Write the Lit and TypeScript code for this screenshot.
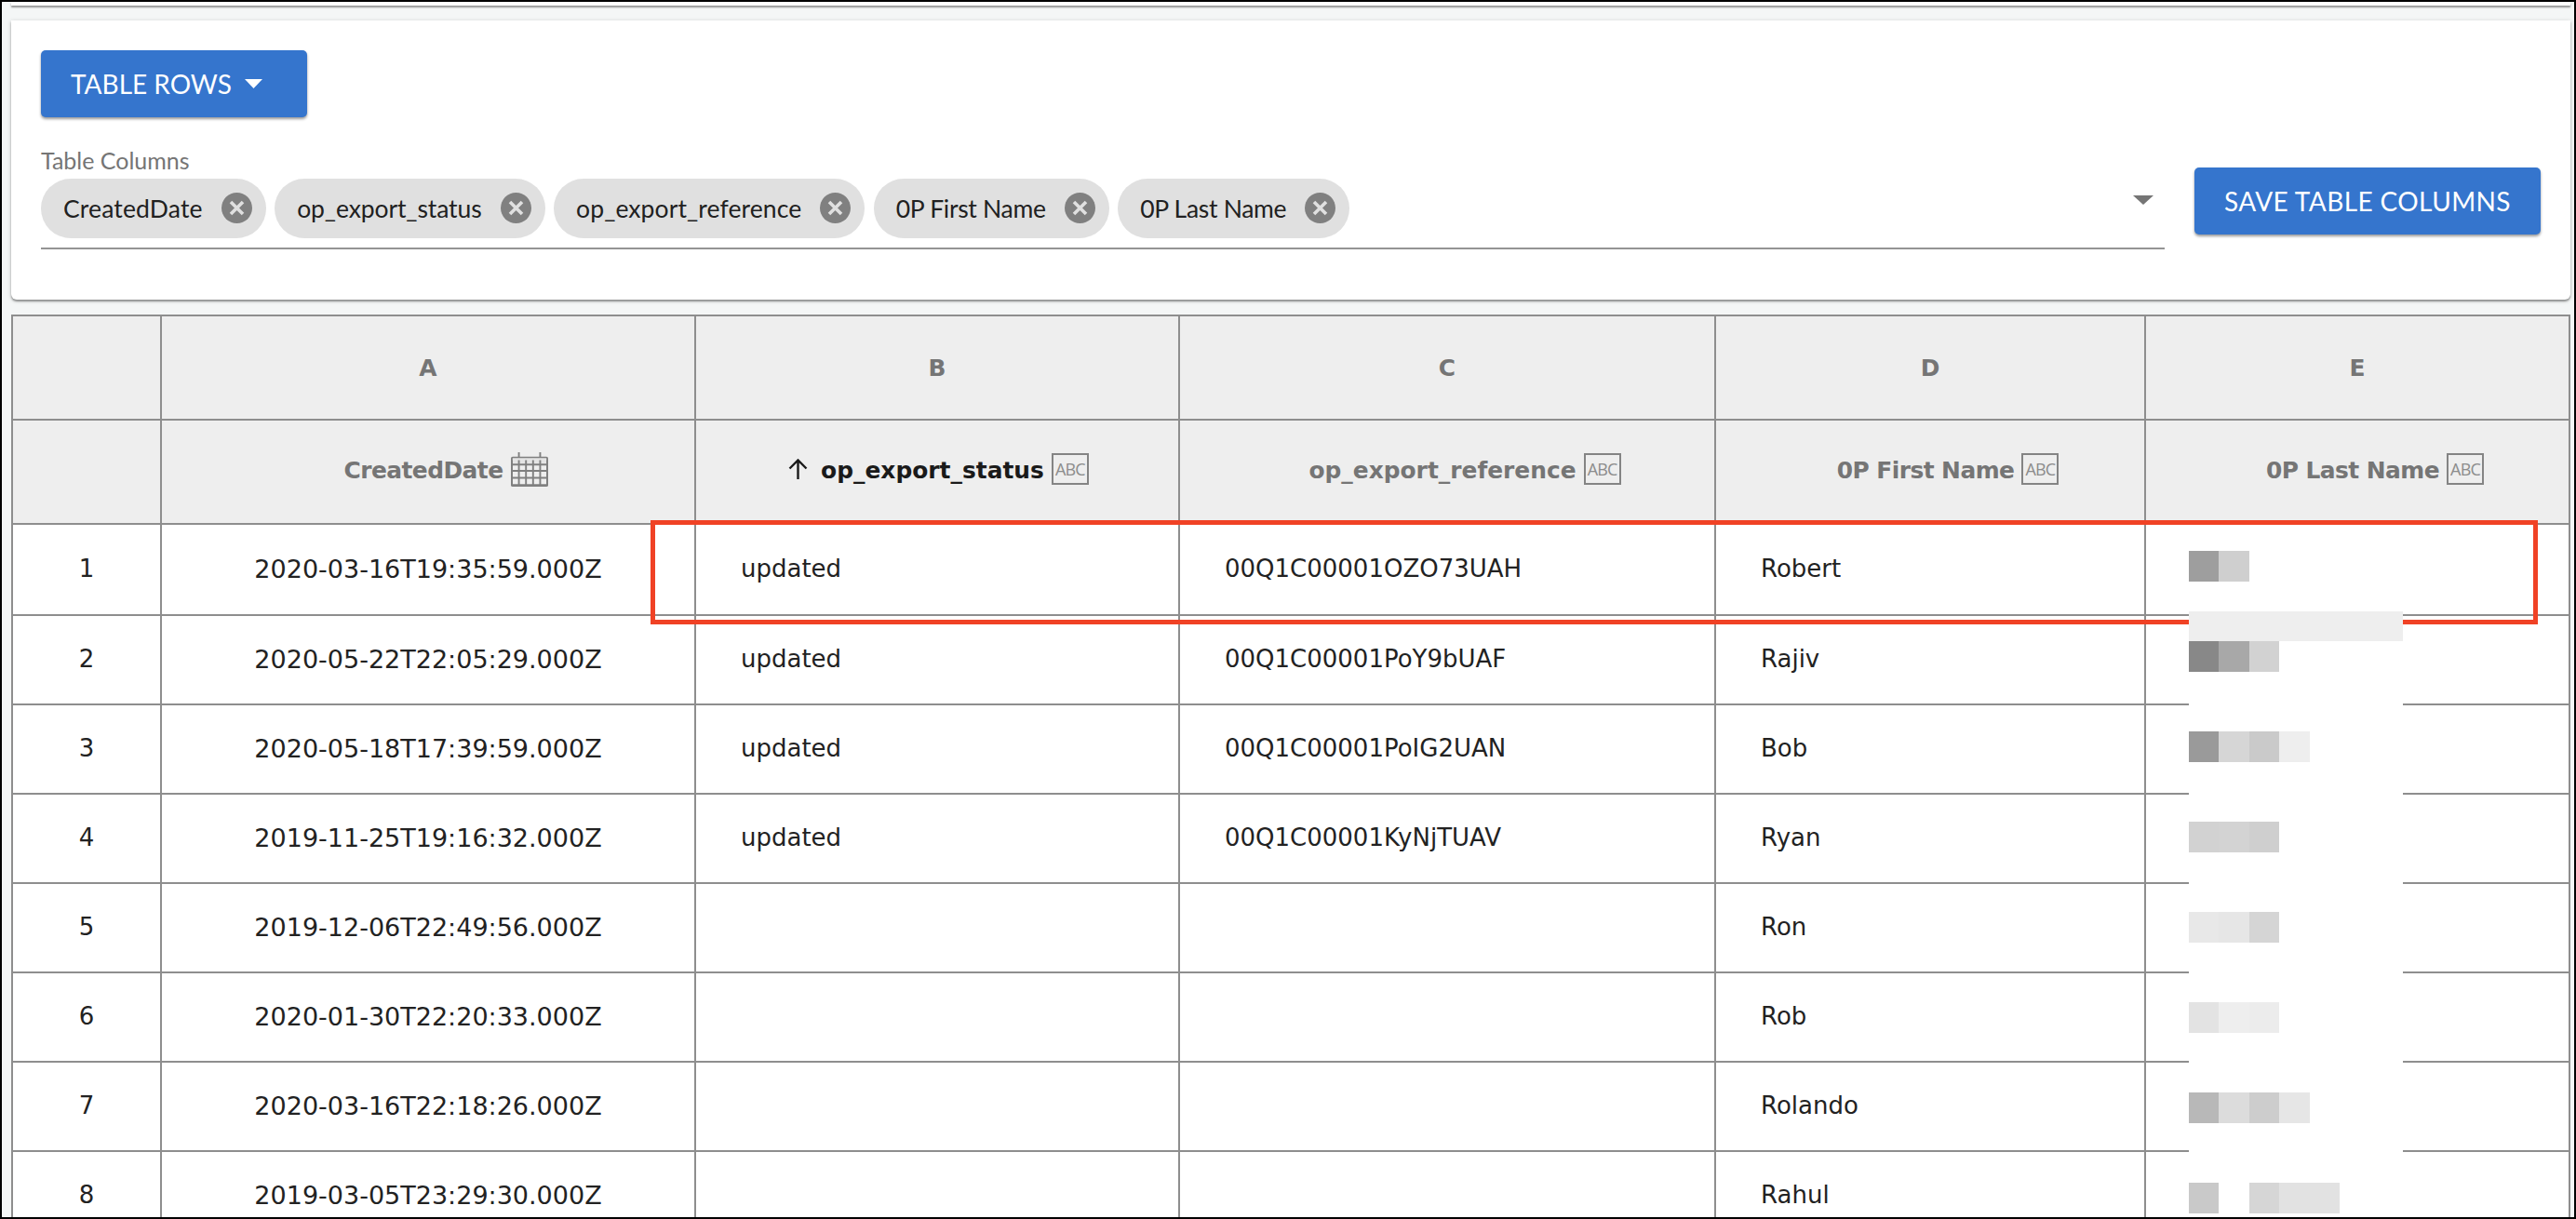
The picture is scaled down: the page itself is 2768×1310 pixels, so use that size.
import { LitElement, html, css, svg } from "lit";
import { customElement } from "lit/decorators.js";

const COLS = [
  { letter: "A", name: "CreatedDate", kind: "date", sorted: false, tight: true },
  { letter: "B", name: "op_export_status", kind: "abc", sorted: true, tight: false },
  { letter: "C", name: "op_export_reference", kind: "abc", sorted: false, tight: false },
  { letter: "D", name: "0P First Name", kind: "abc", sorted: false, tight: true },
  { letter: "E", name: "0P Last Name", kind: "abc", sorted: false, tight: true },
];

const ROWS = [
  ["2020-03-16T19:35:59.000Z", "updated", "00Q1C00001OZO73UAH", "Robert"],
  ["2020-05-22T22:05:29.000Z", "updated", "00Q1C00001PoY9bUAF", "Rajiv"],
  ["2020-05-18T17:39:59.000Z", "updated", "00Q1C00001PoIG2UAN", "Bob"],
  ["2019-11-25T19:16:32.000Z", "updated", "00Q1C00001KyNjTUAV", "Ryan"],
  ["2019-12-06T22:49:56.000Z", "", "", "Ron"],
  ["2020-01-30T22:20:33.000Z", "", "", "Rob"],
  ["2020-03-16T22:18:26.000Z", "", "", "Rolando"],
  ["2019-03-05T23:29:30.000Z", "", "", "Rahul"],
];

const FIRST_BLOCKS = ["#9e9e9e", "#cfcfcf"];
const MASK_BLOCKS = [
  ["#888888", "#a8a8a8", "#d2d2d2"],
  ["#9a9a9a", "#d6d6d6", "#cacaca", "#eeeeee"],
  ["#d2d2d2", "#d3d3d3", "#cfcfcf"],
  ["#e8e8e8", "#e6e6e6", "#d5d5d5"],
  ["#e3e3e3", "#eeeeee", "#ececec"],
  ["#b8b8b8", "#dcdcdc", "#cdcdcd", "#e6e6e6"],
  ["#c9c9c9", "transparent", "#d6d6d6", "#e2e2e2", "#e2e2e2"],
];

const CHIPS = [
  { name: "CreatedDate", cls: "wide" },
  { name: "op_export_status", cls: "snug" },
  { name: "op_export_reference", cls: "loose" },
  { name: "0P First Name", cls: "tight" },
  { name: "0P Last Name", cls: "tight" },
];

const gridLines = () => {
  const out = [];
  for (const x of [1, 9, 17, 25, 33, 41]) out.push(svg`<line x1=${x} y1="9" x2=${x} y2="38" />`);
  for (const y of [14, 21, 29, 37]) out.push(svg`<line x1="0" y1=${y} x2="40" y2=${y} />`);
  return out;
};

@customElement("app-root")
export class AppRoot extends LitElement {
  static styles = css`
    :host {
      display: block;
      box-sizing: border-box;
      width: 2768px;
      height: 1310px;
      overflow: hidden;
      border: 2px solid #000;
      background: #f4f6f6;
      padding: 0 4px 0 10px;
      font-family: "DejaVu Sans", sans-serif;
    }
    .stub {
      height: 4px;
      background: #fff;
      box-shadow: 0 2px 2px rgba(0, 0, 0, 0.4);
    }
    .card {
      box-sizing: border-box;
      height: 300px;
      margin-top: 16px;
      padding: 32px 32px 0 32px;
      background: #fff;
      border-radius: 0 0 6px 6px;
      box-shadow: 0 2px 2px rgba(0, 0, 0, 0.35), 0 1px 5px rgba(0, 0, 0, 0.18);
      font-family: Lato, sans-serif;
    }
    .btn {
      display: inline-flex;
      align-items: center;
      box-sizing: border-box;
      border: 0;
      border-radius: 5px;
      background: #3575cd;
      color: #fff;
      font: 400 28px Lato, sans-serif;
      box-shadow: 0 2px 3px rgba(0, 0, 0, 0.4);
    }
    .rows-btn {
      width: 286px;
      height: 72px;
      padding-left: 32px;
      gap: 14px;
    }
    .save-btn {
      width: 372px;
      height: 72px;
      margin-top: 20px;
      justify-content: center;
      flex: none;
      letter-spacing: 0.4px;
    }
    .controls {
      display: flex;
      gap: 32px;
      margin-top: 34px;
      align-items: flex-start;
    }
    .field {
      flex: 1;
    }
    .label {
      height: 24px;
      line-height: 24px;
      font-size: 25px;
      color: #757575;
    }
    .chip-line {
      display: flex;
      justify-content: space-between;
      margin-top: 8px;
      padding: 0 12px 10px 0;
      border-bottom: 2px solid #949494;
    }
    .chips {
      display: flex;
      gap: 9.5px;
    }
    .chip {
      display: flex;
      align-items: center;
      gap: 20px;
      box-sizing: border-box;
      height: 64px;
      padding: 0 15px 1px 24px;
      border-radius: 32px;
      background: #e0e0e0;
      color: #212121;
      font-size: 26.5px;
      white-space: nowrap;
    }
    .chip.tight {
      letter-spacing: -0.3px;
    }
    .chip.wide {
      letter-spacing: 0.15px;
    }
    .chip.snug {
      letter-spacing: -0.1px;
    }
    .chip.loose {
      letter-spacing: 0.1px;
    }
    .chip svg {
      width: 33px;
      height: 33px;
      flex: none;
    }
    .chip circle {
      fill: #808080;
    }
    .chip path {
      stroke: #e0e0e0;
      stroke-width: 3.6;
      fill: none;
    }
    .select-arrow {
      width: 22px;
      height: 10px;
      margin-top: 18px;
      fill: #757575;
    }
    .rows-btn svg {
      width: 19px;
      height: 10px;
      fill: #fff;
    }
    .table-wrap {
      position: relative;
      margin-top: 16px;
    }
    .table {
      display: grid;
      grid-template-columns: 160px 574px 520px 576px 462px 456px;
      grid-template-rows: 112px 112px 98px;
      grid-auto-rows: 96px;
      border-top: 2px solid #8e8e8e;
      border-left: 2px solid #8e8e8e;
    }
    .cell {
      display: flex;
      align-items: center;
      box-sizing: border-box;
      min-width: 0;
      background: #fff;
      border-right: 2px solid #8e8e8e;
      border-bottom: 2px solid #8e8e8e;
      color: #222;
      font-size: 26px;
      white-space: nowrap;
    }
    .body {
      padding-bottom: 2px;
    }
    .date {
      font-size: 27px;
    }
    .left {
      padding-left: 48px;
    }
    .center {
      justify-content: center;
    }
    .head {
      justify-content: center;
      background: #eeeeee;
      color: #757575;
      font-size: 24.9px;
      font-weight: 700;
    }
    .name {
      padding: 0 0 3px 3px;
    }
    .name.tight {
      letter-spacing: -0.55px;
    }
    .active {
      color: #1a1a1a;
    }
    .sort {
      width: 21px;
      height: 22px;
      margin: -4px 14px 0 0;
      flex: none;
      fill: none;
      stroke: #1a1a1a;
      stroke-width: 2.4;
    }
    .sort.off {
      visibility: hidden;
    }
    .icon-abc {
      display: flex;
      align-items: center;
      justify-content: center;
      box-sizing: border-box;
      width: 40px;
      height: 34px;
      margin: -3px 0 0 8px;
      flex: none;
      border: 2px solid #848484;
      color: #8c8c8c;
      font: 400 18px "Open Sans", sans-serif;
      letter-spacing: -0.8px;
    }
    .icon-cal {
      width: 40px;
      height: 39px;
      margin: -3px 0 0 8px;
      flex: none;
      fill: none;
      stroke: #808080;
      stroke-width: 2;
    }
    .red-box {
      position: absolute;
      left: 687px;
      top: 221px;
      width: 2028px;
      height: 112px;
      box-sizing: border-box;
      border: 5px solid #f04225;
    }
    .redact {
      position: absolute;
      left: 2340px;
      top: 254px;
      bottom: -400px;
      width: 230px;
      display: flex;
      flex-direction: column;
    }
    .blocks {
      display: flex;
      height: 33px;
      flex: none;
    }
    .block {
      width: 32.4px;
      height: 100%;
    }
    .strip {
      height: 32px;
      margin-top: 32px;
      flex: none;
      background: #eeeeee;
    }
    .mask {
      flex: 1;
      display: flex;
      flex-direction: column;
      gap: 64px;
      background: #fff;
    }
  `;

  private block(c: string) {
    return html`<div class="block" style="background:${c}"></div>`;
  }

  render() {
    return html`
      <div class="stub"></div>
      <section class="card">
        <button class="btn rows-btn">
          TABLE ROWS
          <svg viewBox="0 0 19 10"><polygon points="0,0 19,0 9.5,10" /></svg>
        </button>
        <div class="controls">
          <div class="field">
            <div class="label">Table Columns</div>
            <div class="chip-line">
              <div class="chips">
                ${CHIPS.map(
                  (c) => html`<div class="chip ${c.cls}">
                    ${c.name}
                    <svg viewBox="0 0 33 33">
                      <circle cx="16.5" cy="16.5" r="16.5" />
                      <path d="M10 10l13 13M23 10L10 23" />
                    </svg>
                  </div>`
                )}
              </div>
              <svg class="select-arrow" viewBox="0 0 22 10"><polygon points="0,0 22,0 11,10" /></svg>
            </div>
          </div>
          <button class="btn save-btn">SAVE TABLE COLUMNS</button>
        </div>
      </section>
      <div class="table-wrap">
        <div class="table">
          <div class="cell head"></div>
          ${COLS.map((c) => html`<div class="cell head">${c.letter}</div>`)}
          <div class="cell head"></div>
          ${COLS.map(
            (c) => html`<div class="cell head name ${c.sorted ? "active" : ""} ${c.tight ? "tight" : ""}">
              <svg class="sort ${c.sorted ? "" : "off"}" viewBox="0 0 21 22">
                <path d="M10.5 22V2M1.5 10.5l9-9 9 9" />
              </svg>
              ${c.name}
              ${c.kind === "date"
                ? html`<svg class="icon-cal" viewBox="0 0 42 39">
                    <rect x="1" y="6" width="40" height="32" rx="1" />
                    <path d="M9 0v6M33 0v6" />
                    <rect x="2" y="7" width="38" height="7" fill="#e4e4e4" stroke="none" />
                    ${gridLines()}
                  </svg>`
                : html`<span class="icon-abc">ABC</span>`}
            </div>`
          )}
          ${ROWS.map(
            (r, i) => html`
              <div class="cell body center">${i + 1}</div>
              <div class="cell body center date">${r[0]}</div>
              <div class="cell body left">${r[1]}</div>
              <div class="cell body left">${r[2]}</div>
              <div class="cell body left">${r[3]}</div>
              <div class="cell body"></div>
            `
          )}
        </div>
        <div class="red-box"></div>
        <div class="redact">
          <div class="blocks">${FIRST_BLOCKS.map((c) => this.block(c))}</div>
          <div class="strip"></div>
          <div class="mask">
            ${MASK_BLOCKS.map((b) => html`<div class="blocks">${b.map((c) => this.block(c))}</div>`)}
          </div>
        </div>
      </div>
    `;
  }
}
